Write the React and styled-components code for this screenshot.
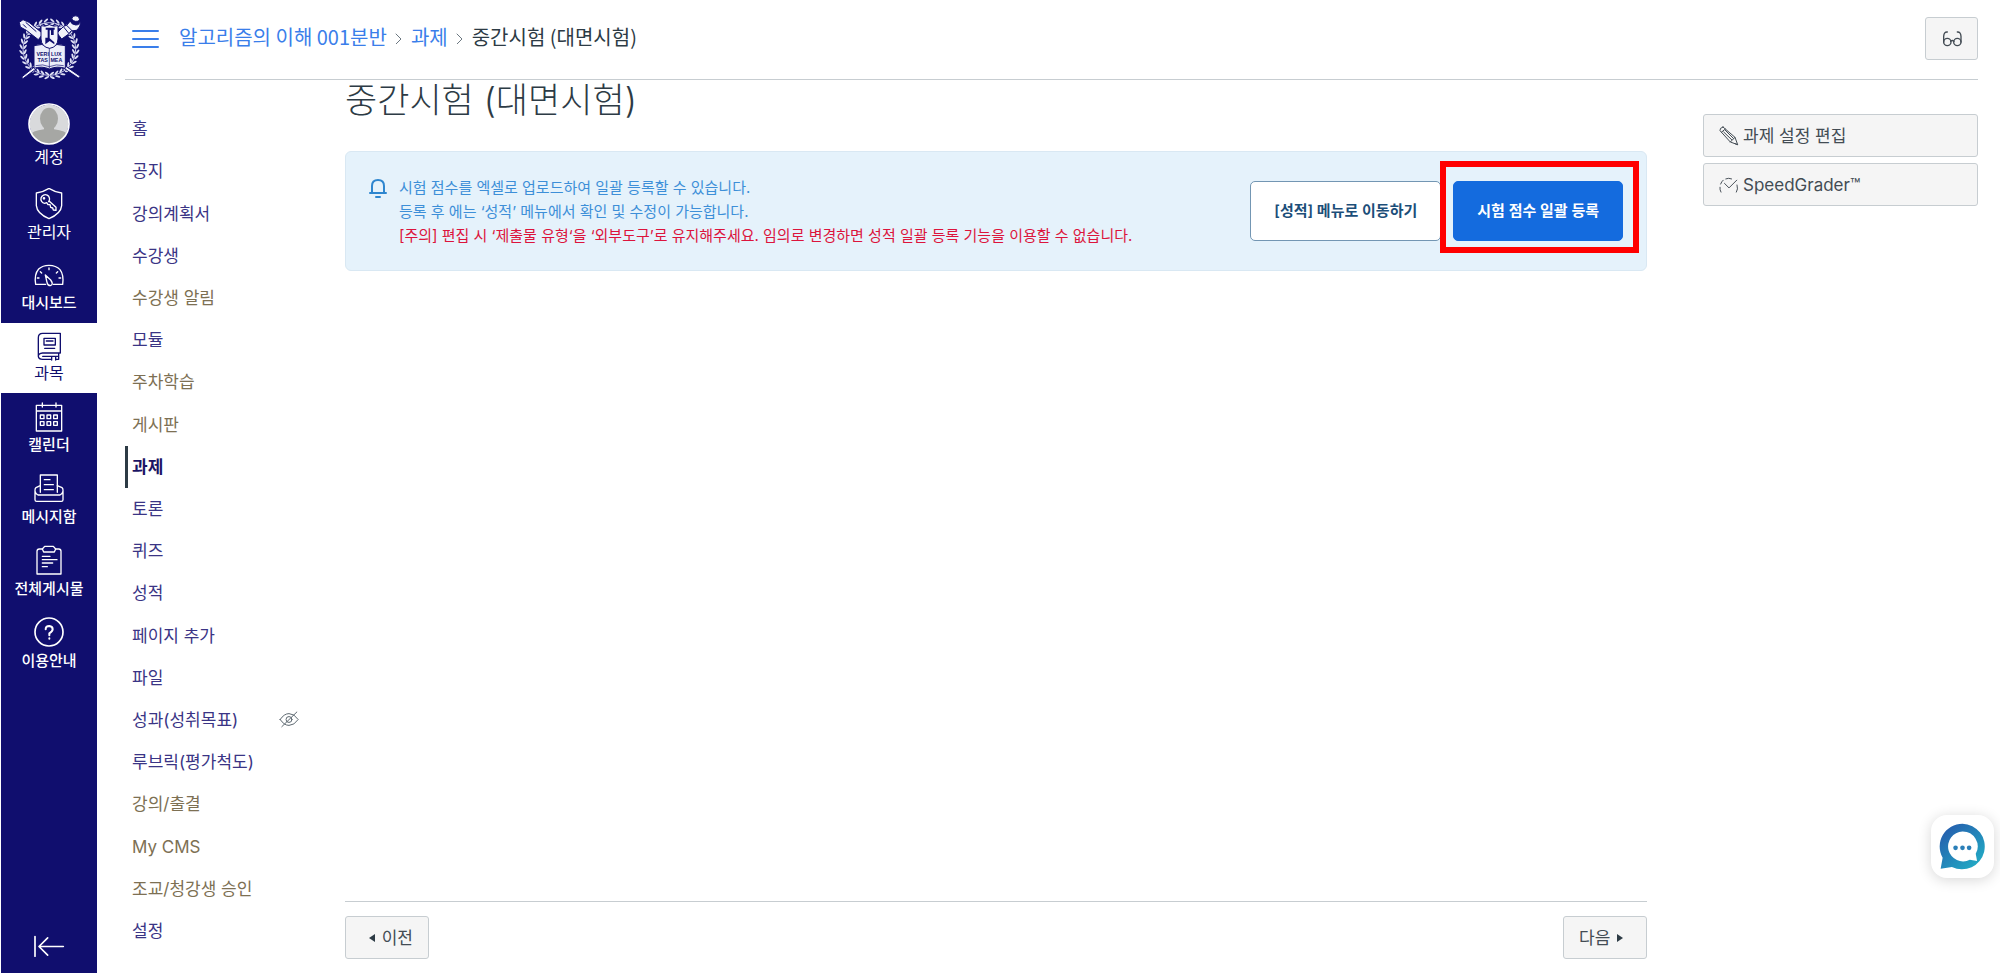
import React from 'react';
import styled, { createGlobalStyle, css } from 'styled-components';

const Global = createGlobalStyle`
  *, *::before, *::after { box-sizing: border-box; }
  body {
    margin: 0;
    background: #fff;
    color: #2d3b45;
    font-family: Inter, 'Noto Sans CJK KR', sans-serif;
    font-size: 17px;
    line-height: 24px;
  }
  a { color: inherit; text-decoration: none; }
  ul, ol { list-style: none; margin: 0; padding: 0; }
  button { font: inherit; color: inherit; cursor: pointer; margin: 0; }
  svg { display: block; flex: none; }
`;

const Page = styled.div`
  display: flex;
  min-height: 100vh;
  padding-left: 1px;
`;

/* ---------- global navigation ---------- */

const GlobalNav = styled.nav`
  flex: none;
  width: 96px;
  background: #100e6e;
  color: #fff;
  display: flex;
  flex-direction: column;
`;

const LogoLink = styled.a`
  display: flex;
  justify-content: center;
  height: 92px;
  padding-top: 15px;
`;

const NavItem = styled.a`
  display: flex;
  flex-direction: column;
  align-items: center;
  justify-content: flex-end;
  gap: 2px;
  height: ${(p) => p.$height}px;
  padding-bottom: 10px;
  font-size: ${(p) => (p.$large ? 16 : 15)}px;
  font-weight: ${(p) => (p.$large ? 400 : 500)};
  line-height: 20px;
  white-space: nowrap;
  ${(p) =>
    p.$active &&
    css`
      background: #fff;
      color: #100e6e;
    `}
`;

const CollapseButton = styled.button`
  display: flex;
  justify-content: center;
  margin-top: auto;
  padding: 10px 0 15px;
  border: 0;
  background: none;
`;

/* ---------- page frame ---------- */

const Frame = styled.div`
  flex: 1;
  min-width: 0;
  display: flex;
  flex-direction: column;
  padding: 0 22px 0 28px;
`;

const TopBar = styled.header`
  display: flex;
  align-items: center;
  height: 80px;
  padding: 0 0 2px 7px;
  border-bottom: 1px solid #c7cdd1;
`;

const MenuToggle = styled.button`
  padding: 0;
  border: 0;
  background: none;
  margin-right: 20px;
  color: #3a7eea;
`;

const Crumbs = styled.ol`
  flex: 1;
  display: flex;
  align-items: center;
  gap: 8px;
  padding-bottom: 3px;
  font-family: 'Noto Sans CJK KR', sans-serif;
  font-size: 20px;
  line-height: 28px;
`;

const Crumb = styled.li`
  display: flex;
  align-items: center;
  gap: 8px;
  a { color: #3a7eea; }
`;

const Columns = styled.div`
  flex: 1;
  display: flex;
`;

const CourseMenu = styled.ul`
  flex: none;
  width: 220px;
  display: flex;
  flex-direction: column;
  padding: 28px 0 21px;
`;

const CourseItem = styled.li`
  flex: 1 0 36px;
  display: flex;
  align-items: center;
  border-left: 3px solid ${(p) => (p.$active ? '#2d3b45' : 'transparent')};
  padding-left: 4px;
  color: ${(p) => (p.$external ? '#7d7053' : '#3a3485')};
  font-weight: ${(p) => (p.$active ? 700 : 400)};
  ${(p) => p.$active && 'color: #1b1464;'}
  svg { color: #5a656d; }
`;

const CourseLink = styled.a`
  width: 147px;
`;

const Main = styled.main`
  flex: 1;
  min-width: 0;
  display: flex;
  flex-direction: column;
  padding-bottom: 14px;
`;

const Title = styled.h1`
  margin: 0 0 31px;
  font-size: 35px;
  font-weight: 300;
  line-height: 40px;
  color: #2d3b45;
`;

const Notice = styled.section`
  display: flex;
  align-items: center;
  gap: 12px;
  height: 120px;
  padding: 0 23px;
  background: #e5f2fb;
  border: 1px solid #d9e8f3;
  border-radius: 6px;
`;

const NoticeBody = styled.div`
  flex: 1;
  display: flex;
  gap: 12px;
  padding-top: 2px;
`;

const NoticeText = styled.p`
  margin: 0;
  font-size: 15px;
  line-height: 24px;
  color: #3d8fd8;
`;

const Warning = styled.strong`
  font-weight: 400;
  color: #dc143c;
`;

const ActionButton = styled.button`
  flex: none;
  height: 60px;
  padding: 0 23px;
  border: 1px solid ${(p) => (p.$primary ? '#146bde' : '#7396b3')};
  border-radius: 5px;
  background: ${(p) => (p.$primary ? '#146bde' : '#fff')};
  color: ${(p) => (p.$primary ? '#fff' : '#1c4e79')};
  font-size: 15px;
  font-weight: 600;
  white-space: nowrap;
`;

const Highlighted = styled.div`
  position: relative;
  &::after {
    content: '';
    position: absolute;
    inset: -20px -16px -12px -13px;
    border: 6px solid #f00;
    pointer-events: none;
  }
`;

const Pager = styled.footer`
  margin-top: auto;
  padding-top: 14px;
  border-top: 1px solid #c7cdd1;
  display: flex;
  justify-content: space-between;
`;

const GreyButton = styled.button`
  display: flex;
  align-items: center;
  justify-content: ${(p) => p.$align || 'center'};
  gap: ${(p) => (p.$block ? 4 : 7)}px;
  width: ${(p) => (p.$block ? '100%' : `${p.$width}px`)};
  height: 43px;
  padding: 0 15px;
  border: 1px solid #c7cdd1;
  border-radius: 3px;
  background: #f5f5f5;
  color: #434c54;
  white-space: nowrap;
`;

const Side = styled.aside`
  flex: none;
  width: 275px;
  margin-left: 56px;
  padding-top: 34px;
  display: flex;
  flex-direction: column;
  gap: 6px;
`;

const ChatButton = styled.button`
  position: fixed;
  right: 6px;
  bottom: 95px;
  width: 63px;
  height: 63px;
  padding: 0;
  border: 0;
  border-radius: 16px;
  background: #fff;
  box-shadow: 0 2px 14px rgba(0, 0, 0, 0.16);
  display: flex;
  align-items: center;
  justify-content: center;
`;

/* ---------- drawings ---------- */

const Icon = ({ box, w, h, stroke = 4, children }) => (
  <svg
    viewBox={box}
    width={w}
    height={h}
    fill="none"
    stroke="currentColor"
    strokeWidth={stroke}
    strokeLinecap="round"
    strokeLinejoin="round"
    aria-hidden="true"
  >
    {children}
  </svg>
);

const leaves = Array.from({ length: 32 }, (_, i) => 6 + i * 11.2);

const Emblem = () => (
  <svg viewBox="53 46 189 195" width="63" height="65" role="img" aria-label="서울대학교">
    <circle cx="147" cy="148" r="79" fill="none" stroke="#c9cbea" strokeWidth="3" />
    <g fill="#dfe1f4">
      {leaves.map((deg) => {
        const a = (deg * Math.PI) / 180;
        const x = 147 + Math.sin(a) * 79;
        const y = 148 - Math.cos(a) * 80;
        const dir = deg < 180 ? deg : deg + 180;
        return (
          <g key={deg} transform={`translate(${x} ${y}) rotate(${dir})`}>
            <ellipse cx="0" cy="-6" rx="8" ry="3" transform="rotate(32 0 -6)" />
            <ellipse cx="0" cy="6" rx="8" ry="3" transform="rotate(-32 0 6)" />
          </g>
        );
      })}
    </g>
    <g stroke="#100e6e" strokeWidth="3" fill="#f1f2fb">
      <path d="M57 68 L68 60 L86 68 L128 102 L114 120 L78 92 L60 82 Z" />
      <path d="M238 62 Q224 70 214 58 L218 50 Q236 44 238 62 Z M238 62 Q240 76 226 76 Q212 74 210 64 L200 76 L190 80 L170 100 L184 118 L204 104 L212 94 L228 92 Q244 80 238 62 Z" />
      <path d="M64 232 L104 200 L110 206 L68 237 Z M240 230 L194 198 L188 204 L234 235 Z" />
    </g>
    <path d="M190 82 L206 102 M198 76 L216 94 M68 74 L78 84 M76 68 L108 96" stroke="#100e6e" strokeWidth="3" />
    <path
      d="M101 138 Q124 130 147 140 Q170 130 195 138 V206 Q170 198 147 208 Q124 198 101 206 Z"
      fill="#eceefa"
      stroke="#100e6e"
      strokeWidth="3"
    />
    <path d="M147 140 V206 M106 198 Q128 192 147 201 Q168 192 190 198" stroke="#100e6e" strokeWidth="2" fill="none" />
    <g fill="#100e6e" fontFamily="Liberation Sans Narrow, Liberation Sans, sans-serif" fontWeight="700" fontSize="16">
      <text x="127" y="168" textAnchor="middle">VERI</text>
      <text x="168" y="168" textAnchor="middle">LUX</text>
      <text x="127" y="187" textAnchor="middle">TAS</text>
      <text x="168" y="187" textAnchor="middle">MEA</text>
    </g>
    <path
      d="M122 78 Q135 82 147 75 Q160 82 173 78 V118 Q172 142 148 146 Q123 142 122 118 Z"
      fill="#f1f2fb"
      stroke="#100e6e"
      strokeWidth="3"
    />
    <path d="M136 84 H163 V90 H160 V106 H152 V92 H148 V116 L162 128 V134 L148 124 L135 134 V114 H142 V90 H136 Z" fill="#100e6e" />
  </svg>
);

const Avatar = () => (
  <svg viewBox="84 309 126 126" width="42" height="42" aria-hidden="true">
    <defs>
      <clipPath id="avatarClip">
        <circle cx="147" cy="372" r="59" />
      </clipPath>
    </defs>
    <circle cx="147" cy="372" r="58" fill="#d9dadc" />
    <g clipPath="url(#avatarClip)" fill="#a6a7a4">
      <ellipse cx="147" cy="356" rx="27" ry="33" />
      <path d="M132 378 H162 V388 Q200 392 208 410 V440 H86 V410 Q94 392 132 388 Z" />
    </g>
    <circle cx="147" cy="372" r="60" fill="none" stroke="#fff" strokeWidth="5" />
  </svg>
);

const ShieldKey = () => (
  <Icon box="99 564 96 96" w={32} h={32}>
    <path d="M147 565 Q166 577 185 579 V617 Q183 641 147 656 Q111 641 109 617 V579 Q128 577 147 565 Z" />
    <path d="M146 605 A13 13 0 1 0 134 610 L140 608 L144 614 L150 614 L152 622 L158 624 L160 630 L168 631 L168 622 L148 604 Z" />
    <circle cx="132" cy="595" r="2" />
  </Icon>
);

const Gauge = () => (
  <Icon box="99 780 96 96" w={32} h={32}>
    <path d="M137 856 H107 Q102 826 116 810 Q128 799 147 799 Q168 799 180 812 Q192 828 188 856 H160" />
    <path d="M136 828 L152 843 Q162 857 151 860 Q143 860 141 850 Z" />
    <path d="M147 807 V812 M121 818 L125 822 M173 818 L169 822 M112 837 H117 M182 837 H177" />
  </Icon>
);

const Book = () => (
  <Icon box="99 24 96 96" w={32} h={32}>
    <path d="M181 96 V37 H128 Q115 37 115 50 V104 M181 96 H128 Q115 97 115 106 Q116 115 128 115 H155 M176 98 V115 H168 M128 106 H174 M155 108 V117 M167 108 V117" />
    <path d="M132 52 H166 V72 H132 Z M139 60 H159 M134 82 H164" />
  </Icon>
);

const Calendar = () => (
  <Icon box="99 240 96 96" w={32} h={32}>
    <path d="M109 253 H185 V330 H109 Z M109 270 H185 M127 246 V258 M168 246 V258" />
    <path d="M121 282 H132 V293 H121 Z M141 282 H152 V293 H141 Z M161 282 H172 V293 H161 Z M121 302 H132 V313 H121 Z M141 302 H152 V313 H141 Z M161 302 H172 V313 H161 Z" />
  </Icon>
);

const Inbox = () => (
  <Icon box="99 456 96 96" w={32} h={32}>
    <path d="M121 514 V462 H172 V514" />
    <path d="M133 476 H150 M133 491 H160 M133 506 H160" />
    <path d="M121 494 L108 500 Q105 502 105 508 V536 Q105 541 110 541 H184 Q189 541 189 536 V508 Q189 502 186 500 L172 494 M105 510 Q106 518 114 522 H180 Q188 518 189 510" />
  </Icon>
);

const Clipboard = () => (
  <Icon box="99 672 96 96" w={32} h={32}>
    <path d="M127 684 H118 Q111 684 111 691 V759 H183 V691 Q183 684 176 684 H167" />
    <path d="M134 676 H160 L167 684 L163 693 H131 L127 684 Z" />
    <path d="M127 706 H150 M127 716 H171 M127 726 H158 M127 737 H142" />
  </Icon>
);

const Help = () => (
  <Icon box="99 891 96 96" w={32} h={32} stroke={5}>
    <circle cx="147" cy="936" r="42" />
    <path d="M137 928 Q137 918 148 918 Q158 919 158 928 Q158 934 148 940 V946 M148 955 V956" strokeWidth="6" />
  </Icon>
);

const Collapse = () => (
  <Icon box="100 106 96 68" w={32} h={23} stroke={5}>
    <path d="M106 110 V169 M191 140 H120 M144 114 L118 140 L144 166" />
  </Icon>
);

const Hamburger = () => (
  <Icon box="0 0 27 20" w={27} h={20} stroke={2}>
    <path d="M1 2 H26 M1 10 H26 M1 18 H26" />
  </Icon>
);

const Chevron = () => (
  <Icon box="0 0 8 14" w={8} h={14} stroke={1}>
    <path d="M1 4 L6 9 L1 14" stroke="#6b7780" />
  </Icon>
);

const Glasses = () => (
  <Icon box="842 88 60 48" w={20} h={16} stroke={4}>
    <path d="M858 91 Q848 90 847 104 V121 M888 91 Q898 90 899 104 V121 M868 119 Q873 114 878 119" />
    <circle cx="858" cy="121" r="11" />
    <circle cx="888" cy="121" r="11" />
  </Icon>
);

const Pencil = () => (
  <Icon box="176 374 60 60" w={20} h={20} stroke={3}>
    <path d="M188 377 L224 408 L232 430 L210 422 L179 388 Q177 380 188 377 Z M183 393 L195 383 M210 422 L224 408 M190 392 L214 415 M195 387 L219 411 M232 430 L224 427" />
  </Icon>
);

const SpeedMark = () => (
  <Icon box="175 526 62 54" w={20} h={18} stroke={3}>
    <path d="M181 575 Q177 568 178 560 M180 550 Q183 542 188 538 M196 534 Q205 530 214 534 M231 553 Q235 566 229 575 M192 548 L206 562 L230 538" />
  </Icon>
);

const HiddenEye = () => (
  <Icon box="505 354 60 52" w={20} h={17} stroke={3}>
    <path d="M508 380 Q520 362 535 362 Q551 362 563 380 Q551 398 535 398 Q520 398 508 380 Z M513 402 L559 357" />
    <circle cx="535" cy="380" r="9" />
  </Icon>
);

const Bell = () => (
  <Icon box="0 -2 18 24" w={18} h={24} stroke={2}>
    <path d="M1 15 H17 M3 15 V8 Q3 2 9 2 Q15 2 15 8 V15 M7 19 H11" stroke="#2e86cf" />
  </Icon>
);

const Arrow = ({ left }) => (
  <svg viewBox="0 0 6 8" width="6" height="8" fill="#2d3b45" aria-hidden="true">
    <path d={left ? 'M6 0 V8 L0 4 Z' : 'M0 0 V8 L6 4 Z'} />
  </svg>
);

const ChatBubble = () => (
  <svg viewBox="1316 127 140 142" width="47" height="47" aria-hidden="true">
    <defs>
      <linearGradient id="bubble" x1="0.15" y1="0.1" x2="0.85" y2="0.9">
        <stop offset="0" stopColor="#2560ae" />
        <stop offset="1" stopColor="#22a9c4" />
      </linearGradient>
    </defs>
    <path
      fill="url(#bubble)"
      fillRule="evenodd"
      d="M1386 129 A69 69 0 1 1 1354 260 L1320 265 L1326 232 A69 69 0 0 1 1386 129 Z
         M1386 153 A45 45 0 1 0 1408 238 L1430 242 L1426 220 A45 45 0 0 0 1386 153 Z"
    />
    <g fill="#2a7fb8">
      <circle cx="1365" cy="202" r="7" />
      <circle cx="1386" cy="202" r="7" />
      <circle cx="1406" cy="202" r="7" />
    </g>
  </svg>
);

/* ---------- data ---------- */

const navItems = [
  { label: '계정', icon: Avatar, height: 85, large: true },
  { label: '관리자', icon: ShieldKey, height: 75, large: true },
  { label: '대시보드', icon: Gauge, height: 71 },
  { label: '과목', icon: Book, height: 70, large: true, active: true },
  { label: '캘린더', icon: Calendar, height: 72 },
  { label: '메시지함', icon: Inbox, height: 72 },
  { label: '전체게시물', icon: Clipboard, height: 72 },
  { label: '이용안내', icon: Help, height: 72 },
];

const courseItems = [
  { label: '홈' },
  { label: '공지' },
  { label: '강의계획서' },
  { label: '수강생' },
  { label: '수강생 알림', external: true },
  { label: '모듈' },
  { label: '주차학습', external: true },
  { label: '게시판', external: true },
  { label: '과제', active: true },
  { label: '토론' },
  { label: '퀴즈' },
  { label: '성적' },
  { label: '페이지 추가' },
  { label: '파일' },
  { label: '성과(성취목표)', hidden: true },
  { label: '루브릭(평가척도)' },
  { label: '강의/출결', external: true },
  { label: 'My CMS', external: true },
  { label: '조교/청강생 승인', external: true },
  { label: '설정' },
];

export default function App() {
  return (
    <>
      <Global />
      <Page>
        <GlobalNav aria-label="전체 메뉴">
          <LogoLink href="#">
            <Emblem />
          </LogoLink>
          {navItems.map(({ label, icon: Glyph, height, large, active }) => (
            <NavItem key={label} href="#" $height={height} $large={large} $active={active}>
              <Glyph />
              {label}
            </NavItem>
          ))}
          <CollapseButton type="button" aria-label="메뉴 접기">
            <Collapse />
          </CollapseButton>
        </GlobalNav>

        <Frame>
          <TopBar>
            <MenuToggle type="button" aria-label="과목 메뉴">
              <Hamburger />
            </MenuToggle>
            <Crumbs>
              <Crumb>
                <a href="#">알고리즘의 이해 001분반</a>
                <Chevron />
              </Crumb>
              <Crumb>
                <a href="#">과제</a>
                <Chevron />
              </Crumb>
              <Crumb>중간시험 (대면시험)</Crumb>
            </Crumbs>
            <GreyButton type="button" $width={53} aria-label="학생으로 보기">
              <Glasses />
            </GreyButton>
          </TopBar>

          <Columns>
            <CourseMenu>
              {courseItems.map(({ label, external, active, hidden }) => (
                <CourseItem key={label} $external={external} $active={active}>
                  <CourseLink href="#">{label}</CourseLink>
                  {hidden && <HiddenEye />}
                </CourseItem>
              ))}
            </CourseMenu>

            <Main>
              <Title>중간시험 (대면시험)</Title>
              <Notice>
                <NoticeBody>
                  <Bell />
                  <NoticeText>
                    시험 점수를 엑셀로 업로드하여 일괄 등록할 수 있습니다.
                    <br />
                    등록 후 에는 ‘성적’ 메뉴에서 확인 및 수정이 가능합니다.
                    <br />
                    <Warning>
                      [주의] 편집 시 ‘제출물 유형‘을 ‘외부도구’로 유지해주세요. 임의로 변경하면 성적 일괄 등록 기능을
                      이용할 수 없습니다.
                    </Warning>
                  </NoticeText>
                </NoticeBody>
                <ActionButton type="button">[성적] 메뉴로 이동하기</ActionButton>
                <Highlighted>
                  <ActionButton type="button" $primary>
                    시험 점수 일괄 등록
                  </ActionButton>
                </Highlighted>
              </Notice>
              <Pager>
                <GreyButton type="button" $width={84} $align="flex-end">
                  <Arrow left />
                  이전
                </GreyButton>
                <GreyButton type="button" $width={84} $align="flex-start">
                  다음
                  <Arrow />
                </GreyButton>
              </Pager>
            </Main>

            <Side>
              <GreyButton type="button" $block $align="flex-start">
                <Pencil />
                과제 설정 편집
              </GreyButton>
              <GreyButton type="button" $block $align="flex-start">
                <SpeedMark />
                SpeedGrader™
              </GreyButton>
            </Side>
          </Columns>
        </Frame>

        <ChatButton type="button" aria-label="채팅 상담">
          <ChatBubble />
        </ChatButton>
      </Page>
    </>
  );
}
